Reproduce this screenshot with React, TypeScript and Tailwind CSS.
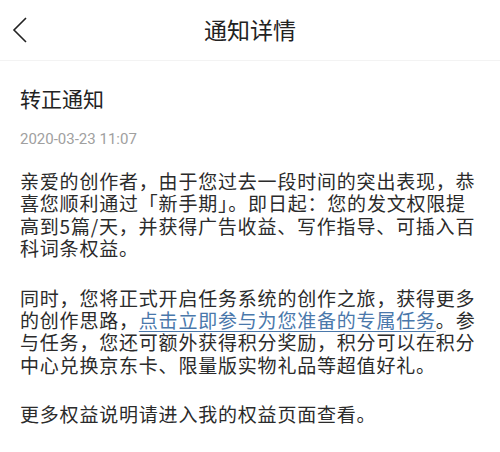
export default function App() {
  return (
    <div
      className="w-[500px] h-[452px] bg-white text-[#333] overflow-hidden"
      style={{ fontFamily: '"Noto Sans CJK SC", "Noto Sans", sans-serif' }}
    >
      {/* Header */}
      <header className="h-[61px] grid grid-cols-[1fr_auto_1fr] items-center border-b border-[#f3f3f3]">
        <div className="pl-[12px] flex items-center">
          <svg width="16" height="28" viewBox="0 0 16 28" fill="none" stroke="#222" strokeWidth="1.6">
            <polyline points="14,2 2,14 14,26" />
          </svg>
        </div>
        <h1 className="text-[23px] leading-none text-[#222] pb-[2px]">通知详情</h1>
        <div />
      </header>

      {/* Body */}
      <main className="px-[20px] pt-[25px]">
        <h2 className="text-[21px] leading-[24px] text-[#222]">转正通知</h2>
        <p className="mt-[20px] text-[15px] leading-[18px] text-[#a0a0a0] font-['Roboto']">
          2020-03-23 11:07
        </p>

        <div className="mt-[22px] text-[19px] leading-[22.3px] tracking-[0.8px] text-[#2b2b2b]">
          <p>
            亲爱的创作者，由于您过去一段时间的突出表现，恭<br />
            喜您顺利通过「新手期」。即日起：您的发文权限提<br />
            高到5篇/天，并获得广告收益、写作指导、可插入百<br />
            科词条权益。
          </p>
          <p className="mt-[27.5px]">
            同时，您将正式开启任务系统的创作之旅，获得更多<br />
            的创作思路，
            <a href="#" className="text-[#4a78ab] underline underline-offset-[3px] decoration-1">
              点击立即参与为您准备的专属任务
            </a>
            。参<br />
            与任务，您还可额外获得积分奖励，积分可以在积分<br />
            中心兑换京东卡、限量版实物礼品等超值好礼。
          </p>
          <p className="mt-[27.5px]">更多权益说明请进入我的权益页面查看。</p>
        </div>
      </main>
    </div>
  );
}
